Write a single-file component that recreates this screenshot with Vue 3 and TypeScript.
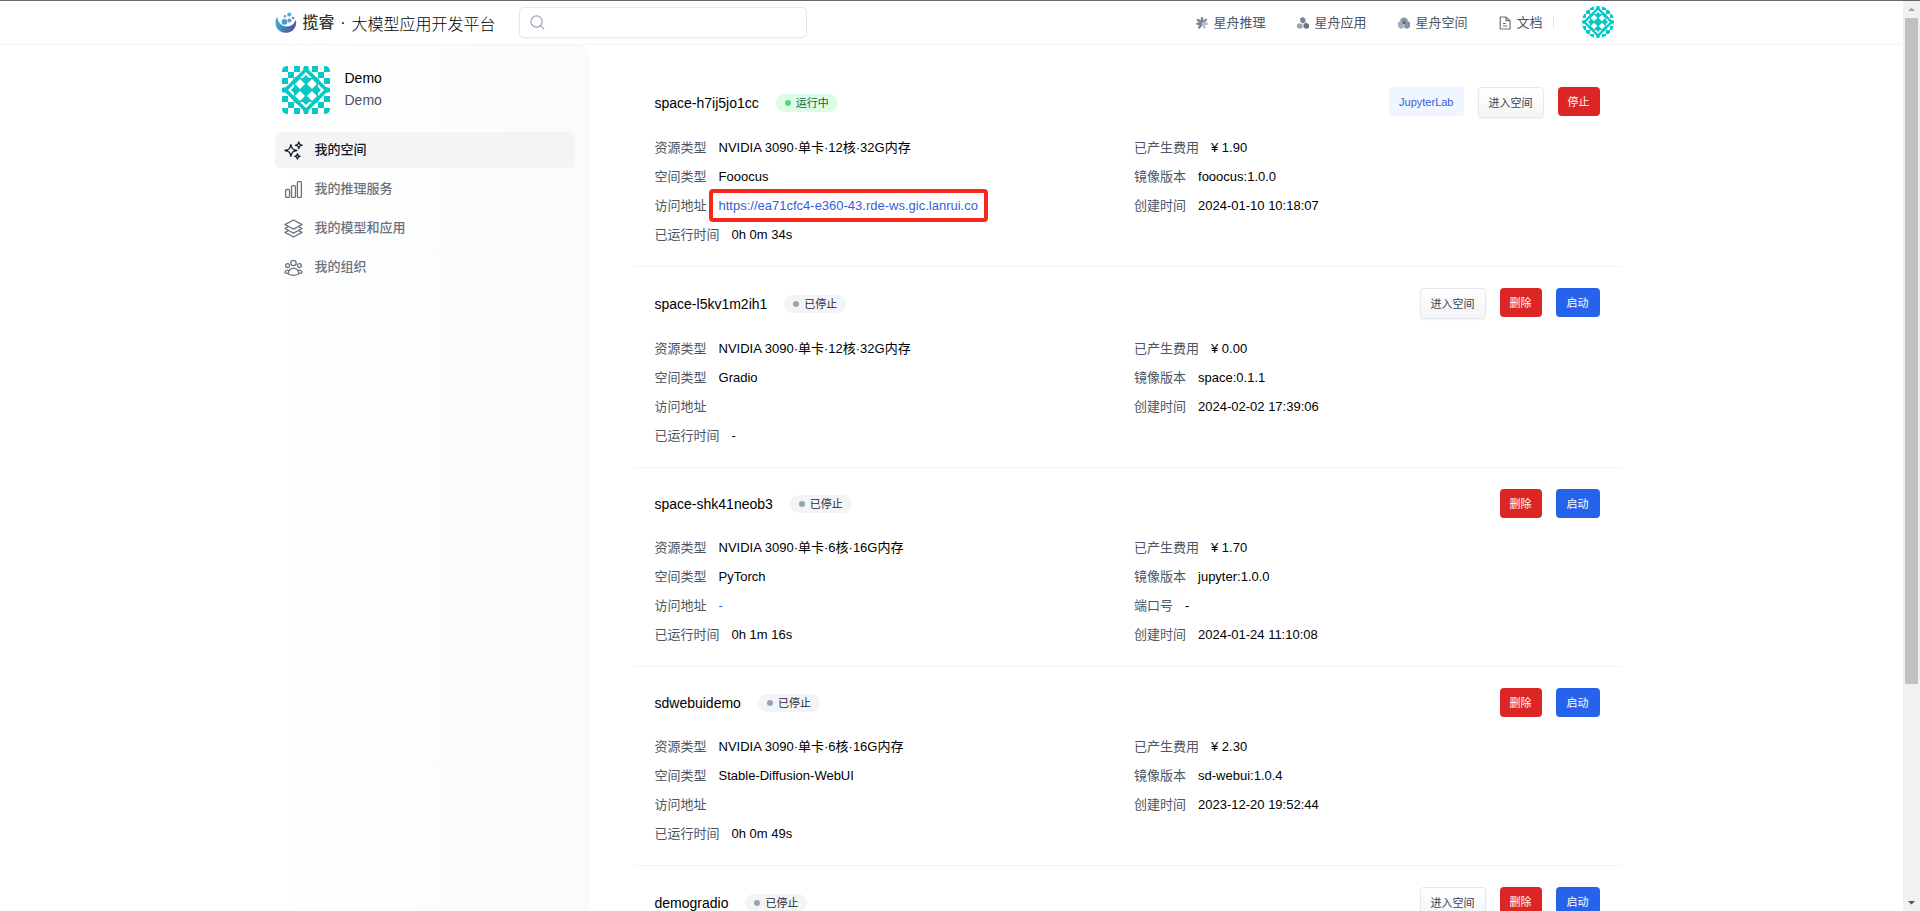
<script setup lang="ts">
import { ref } from 'vue'

interface Field {
  label: string
  value: string
  link?: boolean
  marked?: boolean
}

interface Action {
  text: string
  kind: 'light' | 'plain' | 'danger' | 'primary'
}

interface Space {
  name: string
  running: boolean
  actions: Action[]
  left: Field[]
  right: Field[]
}

const keyword = ref('')

const navItems = [
  { text: '星舟推理', icon: 'asterisk' },
  { text: '星舟应用', icon: 'cubes' },
  { text: '星舟空间', icon: 'ball' },
  { text: '文档', icon: 'doc' }
]

const menu = [
  {
    text: '我的空间',
    active: true,
    paths: [
      'M9.813 15.904 9 18.75l-.813-2.846a4.5 4.5 0 0 0-3.09-3.09L2.25 12l2.846-.813a4.5 4.5 0 0 0 3.09-3.09L9 5.25l.813 2.846a4.5 4.5 0 0 0 3.09 3.09L15.75 12l-2.846.813a4.5 4.5 0 0 0-3.09 3.09Z',
      'M18.259 8.715 18 9.75l-.259-1.035a3.375 3.375 0 0 0-2.455-2.456L14.25 6l1.036-.259a3.375 3.375 0 0 0 2.455-2.456L18 2.25l.259 1.035a3.375 3.375 0 0 0 2.456 2.456L21.75 6l-1.035.259a3.375 3.375 0 0 0-2.456 2.456Z',
      'M16.894 20.567 16.5 21.75l-.394-1.183a2.25 2.25 0 0 0-1.423-1.423L13.5 18.75l1.183-.394a2.25 2.25 0 0 0 1.423-1.423l.394-1.183.394 1.183a2.25 2.25 0 0 0 1.423 1.423l1.183.394-1.183.394a2.25 2.25 0 0 0-1.423 1.423Z'
    ]
  },
  {
    text: '我的推理服务',
    active: false,
    paths: [
      'M3 13.125C3 12.504 3.504 12 4.125 12h2.25c.621 0 1.125.504 1.125 1.125v6.75C7.5 20.496 6.996 21 6.375 21h-2.25A1.125 1.125 0 0 1 3 19.875v-6.75Z',
      'M9.75 8.625c0-.621.504-1.125 1.125-1.125h2.25c.621 0 1.125.504 1.125 1.125v11.25c0 .621-.504 1.125-1.125 1.125h-2.25a1.125 1.125 0 0 1-1.125-1.125V8.625Z',
      'M16.5 4.125c0-.621.504-1.125 1.125-1.125h2.25C20.496 3 21 3.504 21 4.125v15.75c0 .621-.504 1.125-1.125 1.125h-2.25a1.125 1.125 0 0 1-1.125-1.125V4.125Z'
    ]
  },
  {
    text: '我的模型和应用',
    active: false,
    paths: [
      'M6.429 9.75 2.25 12l4.179 2.25m0-4.5 5.571 3 5.571-3m-11.142 0L2.25 7.5 12 2.25l9.75 5.25-4.179 2.25m0 0L21.75 12l-4.179 2.25m0 0 4.179 2.25L12 21.75 2.25 16.5l4.179-2.25m11.142 0-5.571 3-5.571-3'
    ]
  },
  {
    text: '我的组织',
    active: false,
    paths: [
      'M18 18.72a9.094 9.094 0 0 0 3.741-.479 3 3 0 0 0-4.682-2.72m.94 3.198.001.031c0 .225-.012.447-.037.666A11.944 11.944 0 0 1 12 21c-2.17 0-4.207-.576-5.963-1.584A6.062 6.062 0 0 1 6 18.719m12 0a5.971 5.971 0 0 0-.941-3.197m0 0A5.995 5.995 0 0 0 12 12.75a5.995 5.995 0 0 0-5.058 2.772m0 0a3 3 0 0 0-4.681 2.72 8.986 8.986 0 0 0 3.74.477m.94-3.197a5.971 5.971 0 0 0-.94 3.197M15 6.75a3 3 0 1 1-6 0 3 3 0 0 1 6 0Zm6 3a2.25 2.25 0 1 1-4.5 0 2.25 2.25 0 0 1 4.5 0Zm-13.5 0a2.25 2.25 0 1 1-4.5 0 2.25 2.25 0 0 1 4.5 0Z'
    ]
  }
]

const enter: Action = { text: '进入空间', kind: 'plain' }
const stop: Action = { text: '停止', kind: 'danger' }
const remove: Action = { text: '删除', kind: 'danger' }
const start: Action = { text: '启动', kind: 'primary' }

const spaces: Space[] = [
  {
    name: 'space-h7ij5jo1cc',
    running: true,
    actions: [{ text: 'JupyterLab', kind: 'light' }, enter, stop],
    left: [
      { label: '资源类型', value: 'NVIDIA 3090·单卡·12核·32G内存' },
      { label: '空间类型', value: 'Fooocus' },
      { label: '访问地址', value: 'https://ea71cfc4-e360-43.rde-ws.gic.lanrui.co', link: true, marked: true },
      { label: '已运行时间', value: '0h 0m 34s' }
    ],
    right: [
      { label: '已产生费用', value: '¥ 1.90' },
      { label: '镜像版本', value: 'fooocus:1.0.0' },
      { label: '创建时间', value: '2024-01-10 10:18:07' }
    ]
  },
  {
    name: 'space-l5kv1m2ih1',
    running: false,
    actions: [enter, remove, start],
    left: [
      { label: '资源类型', value: 'NVIDIA 3090·单卡·12核·32G内存' },
      { label: '空间类型', value: 'Gradio' },
      { label: '访问地址', value: '' },
      { label: '已运行时间', value: '-' }
    ],
    right: [
      { label: '已产生费用', value: '¥ 0.00' },
      { label: '镜像版本', value: 'space:0.1.1' },
      { label: '创建时间', value: '2024-02-02 17:39:06' }
    ]
  },
  {
    name: 'space-shk41neob3',
    running: false,
    actions: [remove, start],
    left: [
      { label: '资源类型', value: 'NVIDIA 3090·单卡·6核·16G内存' },
      { label: '空间类型', value: 'PyTorch' },
      { label: '访问地址', value: '-', link: true },
      { label: '已运行时间', value: '0h 1m 16s' }
    ],
    right: [
      { label: '已产生费用', value: '¥ 1.70' },
      { label: '镜像版本', value: 'jupyter:1.0.0' },
      { label: '端口号', value: '-' },
      { label: '创建时间', value: '2024-01-24 11:10:08' }
    ]
  },
  {
    name: 'sdwebuidemo',
    running: false,
    actions: [remove, start],
    left: [
      { label: '资源类型', value: 'NVIDIA 3090·单卡·6核·16G内存' },
      { label: '空间类型', value: 'Stable-Diffusion-WebUI' },
      { label: '访问地址', value: '' },
      { label: '已运行时间', value: '0h 0m 49s' }
    ],
    right: [
      { label: '已产生费用', value: '¥ 2.30' },
      { label: '镜像版本', value: 'sd-webui:1.0.4' },
      { label: '创建时间', value: '2023-12-20 19:52:44' }
    ]
  },
  {
    name: 'demogradio',
    running: false,
    actions: [enter, remove, start],
    left: [],
    right: []
  }
]
</script>

<template>
  <div class="window">
    <svg class="defs" aria-hidden="true">
      <defs>
        <g id="edge-tile">
          <path d="M6 0H10L9 4L3 10L0 12V6H6Z" fill="#fff" />
          <path d="M12 6V9L9 12H6Z" fill="#fff" />
        </g>
        <g id="quarter">
          <path d="M6 0H12V6H6ZM0 6H6V12H0Z" fill="#fff" />
          <path d="M18 13L23 18L18 23L13 18Z" fill="#fff" />
          <use href="#edge-tile" x="12" />
          <use href="#edge-tile" transform="matrix(0 1 1 0 0 12)" />
        </g>
        <symbol id="identicon" viewBox="0 0 48 48">
          <rect width="48" height="48" fill="#06c8c4" />
          <use href="#quarter" />
          <use href="#quarter" transform="matrix(-1 0 0 1 48 0)" />
          <use href="#quarter" transform="matrix(1 0 0 -1 0 48)" />
          <use href="#quarter" transform="matrix(-1 0 0 -1 48 48)" />
        </symbol>
      </defs>
    </svg>

    <div class="page">
      <header class="topbar">
        <div class="shell topbar-inner">
          <a class="brand" href="#">
            <svg class="logo" viewBox="0 0 22 22" aria-hidden="true">
              <defs>
                <linearGradient id="logo-fill" x1="0" y1="0" x2="1" y2="0.3">
                  <stop offset="0" stop-color="#4ab3d6" />
                  <stop offset="0.55" stop-color="#3a86bd" />
                  <stop offset="1" stop-color="#5b4f9e" />
                </linearGradient>
              </defs>
              <path d="M2.2 4.6C-.6 8.600 0 14.600 3.500 18C8 22 14.500 21.500 18.200 18C20.800 15.400 21.800 11.600 20.800 7.500C20.200 10.500 18.200 12.600 15.600 13.700C12.500 15 8.600 14.800 6 12.600C3.700 10.600 2.400 7.600 2.200 4.600Z" fill="url(#logo-fill)" />
              <circle cx="9.500" cy="9.800" r="2.900" fill="#4b9fcb" />
              <circle cx="14.500" cy="8.500" r="2" fill="#4aa6cd" />
              <circle cx="10" cy="4.300" r="1.400" fill="#53b4d4" />
              <circle cx="14.300" cy="2.500" r="2" fill="#4aaed2" />
              <circle cx="18" cy="6" r="1.300" fill="#4d8fc4" />
            </svg>
            <span class="brand-name">揽睿</span>
            <span class="brand-dot">·</span>
            <span class="brand-title">大模型应用开发平台</span>
          </a>
          <label class="search">
            <svg viewBox="0 0 16 16" aria-hidden="true">
              <circle cx="7" cy="7" r="6" />
              <path d="M11.300 11.300L15 15" />
            </svg>
            <input v-model="keyword" type="search" aria-label="搜索" />
          </label>
          <nav class="links">
            <a v-for="item in navItems" :key="item.text" href="#">
              <svg v-if="item.icon === 'asterisk'" viewBox="0 0 12 12" aria-hidden="true">
                <g stroke-width="2.500" stroke-linecap="round">
                  <path d="M6 1.300V4.500M2 3L4.800 5M1.500 6.800H4.800M3.200 10.500L5 7.800" stroke="#7b8494" />
                  <path d="M10 2.800L7.400 5" stroke="#8e96a4" />
                  <path d="M7 7.500L8.500 10.500M8 6.800H10.700" stroke="#b9bec8" />
                </g>
              </svg>
              <svg v-else-if="item.icon === 'cubes'" viewBox="0 0 12 12" aria-hidden="true">
                <path d="M3 1.500L6 0L8.500 2V5L6 6.500L3.500 5Z" fill="#7b8494" />
                <path d="M0 7.500L2.500 6L5.500 7.500V10.500L3 12L0 10.500Z" fill="#9ca3af" />
                <path d="M6.500 7.200L9 5.500L12 7.500V10.500L9.500 12L6.500 10.500Z" fill="#6b7280" />
              </svg>
              <svg v-else-if="item.icon === 'ball'" viewBox="0 0 12 12" aria-hidden="true">
                <path d="M2.500 2L6 .3L9.500 2V5L6 6.500L2.500 5Z" fill="#8b93a1" />
                <path d="M0 5.500L2.700 3.500L5.800 6V10.500L3 12L0 10Z" fill="#a8aeb9" />
                <path d="M12 5.500L9.300 3.500L6.200 6V10.500L9 12L12 10Z" fill="#8b93a1" />
                <circle cx="6" cy="5.800" r="1.300" fill="#4b5563" />
              </svg>
              <svg v-else viewBox="0 0 12 14" class="doc" aria-hidden="true">
                <path d="M1.200 1H7L11 4.700V13H1.200Z" />
                <path d="M7 1V4.700H11M4 7.500H7M4 10H8.500" />
              </svg>
              <span>{{ item.text }}</span>
            </a>
          </nav>
          <span class="separator"></span>
          <button class="account" type="button" aria-label="Demo">
            <svg><use href="#identicon" /></svg>
          </button>
        </div>
      </header>

      <div class="shell body">
        <aside class="sidebar">
          <div class="profile">
            <svg class="avatar" aria-hidden="true"><use href="#identicon" /></svg>
            <div class="profile-text">
              <div>Demo</div>
              <div class="muted">Demo</div>
            </div>
          </div>
          <nav class="menu">
            <a v-for="entry in menu" :key="entry.text" href="#" :class="{ active: entry.active }">
              <svg viewBox="0 0 24 24" aria-hidden="true">
                <path v-for="d in entry.paths" :key="d" :d="d" />
              </svg>
              <span>{{ entry.text }}</span>
            </a>
          </nav>
        </aside>

        <main class="spaces">
          <section v-for="space in spaces" :key="space.name" class="space">
            <div class="space-head">
              <h2>{{ space.name }}</h2>
              <span class="badge" :class="{ running: space.running }">
                <i></i>{{ space.running ? '运行中' : '已停止' }}
              </span>
              <div class="actions">
                <button v-for="action in space.actions" :key="action.text" type="button" :class="action.kind">
                  {{ action.text }}
                </button>
              </div>
            </div>
            <div class="columns">
              <dl v-for="(fields, side) in [space.left, space.right]" :key="side">
                <div v-for="field in fields" :key="field.label" class="field">
                  <dt>{{ field.label }}</dt>
                  <dd>
                    <a v-if="field.link" href="#" :class="{ marked: field.marked }">{{ field.value }}</a>
                    <template v-else>{{ field.value }}</template>
                  </dd>
                </div>
              </dl>
            </div>
          </section>
        </main>
      </div>
    </div>

    <div class="scrollbar" aria-hidden="true">
      <svg viewBox="0 0 17 17"><path d="M5 10H12L8.500 6.500Z" fill="#a3a3a3" /></svg>
      <div class="track"><div class="thumb"></div></div>
      <svg viewBox="0 0 17 17"><path d="M5 7H12L8.500 10.500Z" fill="#505050" /></svg>
    </div>
  </div>
</template>

<style>
body {
  background: #fff;
}
</style>

<style scoped>
.window {
  display: flex;
  height: 100vh;
  box-sizing: border-box;
  overflow: hidden;
  border-top: 1px solid #66656a;
  font-family: "Liberation Sans", "Noto Sans CJK SC", sans-serif;
  font-size: 13px;
  line-height: 18px;
  color: #000;
}
.window *,
.window *::after {
  box-sizing: border-box;
}
.defs {
  position: absolute;
  width: 0;
  height: 0;
}
a {
  color: inherit;
  text-decoration: none;
}
button {
  font: inherit;
  cursor: pointer;
}
.page {
  flex: 1;
  min-width: 0;
  display: flex;
  flex-direction: column;
  overflow: hidden;
}
.shell {
  width: 100%;
  max-width: 1354px;
  margin: 0 auto;
}

.topbar {
  border-bottom: 1px solid #f3f4f6;
}
.topbar-inner {
  display: flex;
  align-items: center;
  height: 43px;
  padding-right: 15px;
}
.brand {
  display: flex;
  align-items: center;
  width: 244px;
  font-size: 16px;
  line-height: 24px;
  white-space: nowrap;
}
.logo {
  width: 22px;
  height: 22px;
  margin-right: 6px;
}
.brand-name {
  font-weight: 500;
  color: #333;
}
.brand-dot {
  width: 17px;
  text-align: center;
}
.brand-title {
  font-family: "Noto Sans CJK SC", sans-serif;
  font-weight: 300;
}
.search {
  display: flex;
  align-items: center;
  width: 288px;
  height: 31px;
  padding: 0 10px;
  border: 1px solid #e5e7eb;
  border-radius: 5px;
  box-shadow: 0 1px 2px rgba(0, 0, 0, 0.05);
}
.search svg {
  width: 15px;
  height: 15px;
  fill: none;
  stroke: #9ca3af;
  stroke-width: 1.3;
}
.search input {
  flex: 1;
  min-width: 0;
  margin-left: 8px;
  border: 0;
  outline: 0;
  background: none;
  font: inherit;
}
.links {
  display: flex;
  gap: 32px;
  margin-left: auto;
}
.links a {
  display: flex;
  align-items: center;
  gap: 5px;
  color: #4b5563;
}
.links svg {
  width: 12px;
  height: 12px;
  fill: none;
}
.links svg.doc {
  height: 14px;
  stroke: #6b7280;
  stroke-width: 1.2;
}
.separator {
  width: 1px;
  height: 13px;
  margin: 0 28px 0 10px;
  background: #e5e7eb;
}
.account {
  width: 32px;
  height: 32px;
  margin-bottom: 2px;
  padding: 0;
  border: 0;
  border-radius: 50%;
  overflow: hidden;
  background: none;
}
.account svg {
  display: block;
  width: 32px;
  height: 32px;
}

.body {
  display: flex;
  flex: 1;
  min-height: 0;
}
.sidebar {
  flex: none;
  width: 314px;
  padding: 21px 14px 0 0;
  border-top-right-radius: 10px;
  background: linear-gradient(to right, #fff, #f9fafb);
}
.profile {
  display: flex;
  align-items: center;
  gap: 15px;
  padding-left: 7px;
  font-size: 14px;
  line-height: 22px;
}
.profile-text {
  padding-bottom: 2px;
}
.avatar {
  width: 48px;
  height: 48px;
  border-radius: 5px;
}
.muted {
  color: #4b5563;
}
.menu {
  display: flex;
  flex-direction: column;
  gap: 3px;
  margin-top: 18px;
}
.menu a {
  display: flex;
  align-items: center;
  gap: 11px;
  height: 36px;
  padding-left: 8px;
  border-radius: 5px;
  font-weight: 500;
  color: #6b7280;
}
.menu a.active {
  background: #f3f4f6;
  color: #111827;
}
.menu svg {
  width: 21px;
  height: 21px;
  fill: none;
  stroke: currentColor;
  stroke-width: 1.5;
  stroke-linecap: round;
  stroke-linejoin: round;
}

.spaces {
  flex: 1;
  min-width: 0;
  padding: 21px 7px 0 44px;
}
.space {
  padding: 21px 22px 22px;
  border-bottom: 1px solid #f3f4f6;
}
.space-head {
  display: flex;
  align-items: center;
  margin-bottom: 21px;
}
h2 {
  margin: 0 17px 0 0;
  font-size: 14px;
  font-weight: 400;
  line-height: 22px;
}
.badge {
  display: flex;
  align-items: center;
  height: 18px;
  padding: 0 9px;
  border-radius: 9px;
  background: #f3f4f6;
  color: #1f2937;
  font-size: 11px;
}
.badge i {
  width: 6px;
  height: 6px;
  margin-right: 5px;
  border-radius: 50%;
  background: #9ca3af;
}
.badge.running {
  background: #dcfce7;
  color: #166534;
}
.badge.running i {
  background: #4ade80;
}
.actions {
  display: flex;
  align-items: flex-start;
  gap: 14px;
  margin-left: auto;
}
.actions button {
  height: 29px;
  padding: 0 11px;
  border: 0;
  border-radius: 4px;
  font-size: 11px;
  line-height: 16px;
  color: #fff;
}
.actions .light {
  padding: 0 10px;
  background: #eff6ff;
  color: #3560d8;
}
.actions .plain {
  height: 31px;
  padding: 0 10px;
  border: 1px solid #e5e7eb;
  background: linear-gradient(#fff, #f3f4f6);
  box-shadow: 0 1px 2px rgba(0, 0, 0, 0.06);
  color: #374151;
}
.actions .danger {
  padding: 0 10px;
  background: #dc2626;
}
.actions .primary {
  background: #2563eb;
}
.columns {
  display: grid;
  grid-template-columns: 1fr 1fr;
  column-gap: 14px;
}
dl {
  display: flex;
  flex-direction: column;
  gap: 11px;
  margin: 0;
}
.field {
  display: flex;
  gap: 12px;
  height: 18px;
}
dt {
  color: #4b5563;
}
dd {
  margin: 0;
}
dd a {
  color: #3560d8;
}
.marked {
  position: relative;
}
.marked::after {
  content: "";
  position: absolute;
  inset: -9px -10px;
  border: 4px solid #f5281b;
  border-radius: 4px;
}

.scrollbar {
  display: flex;
  flex: none;
  flex-direction: column;
  width: 17px;
  background: #f1f1f1;
}
.scrollbar svg {
  width: 17px;
  height: 17px;
}
.track {
  flex: 1;
  padding: 0 2px;
}
.thumb {
  height: 76%;
  background: #c1c1c1;
}
</style>
